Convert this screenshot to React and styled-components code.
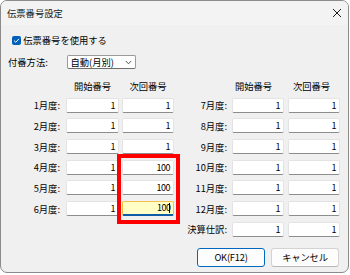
import React from "react";
import styled, { createGlobalStyle } from "styled-components";

const Global = createGlobalStyle`
  html, body { margin: 0; padding: 0; background: #ffffff; }
  body {
    font-family: "Noto Sans CJK JP", "Noto Sans", sans-serif;
    font-size: 9.3px;
    color: #000;
  }
`;

const Window = styled.div`
  position: relative;
  box-sizing: border-box;
  width: 349px;
  height: 273px;
  border: 1px solid #8b8b8b;
  border-radius: 7px;
  background: #f0f0f0;
  overflow: hidden;
  display: flex;
  flex-direction: column;
`;

const TitleBar = styled.div`
  box-sizing: border-box;
  height: 24px;
  background: #f3f3f3;
  display: flex;
  align-items: center;
  justify-content: space-between;
  padding: 0 6px 0 6px;
`;

const Title = styled.span`
  font-size: 9.3px;
  line-height: 12px;
  color: #1a1a1a;
`;

const CheckRow = styled.label`
  display: flex;
  align-items: center;
  gap: 2.5px;
  height: 14px;
  margin: 8px 0 0 10.7px;
  line-height: 12px;
`;

const CheckBox = styled.span`
  box-sizing: border-box;
  width: 9px;
  height: 9px;
  border-radius: 2px;
  background: #005fb8;
  display: flex;
  align-items: center;
  justify-content: center;
`;

const SelectRow = styled.div`
  display: flex;
  align-items: center;
  height: 14px;
  margin: 8px 0 0 7px;
`;

const SelectLabel = styled.span`
  width: 59px;
  line-height: 12px;
`;

const Select = styled.div`
  box-sizing: border-box;
  width: 69px;
  height: 14px;
  background: #fff;
  border: 1px solid #9a9a9a;
  border-bottom-color: #6e6e6e;
  border-radius: 2px;
  display: flex;
  align-items: center;
  justify-content: space-between;
  padding: 0 3px 0 2.5px;
  line-height: 12px;
`;

const Table = styled.div`
  display: grid;
  grid-template-columns: 65px 53px 55px 58px 52px 56px;
  grid-template-rows: 11px repeat(7, 15px);
  row-gap: 5.7px;
  margin-top: 12px;
  align-items: center;
`;

const Head = styled.div`
  grid-column: ${(p) => p.$col};
  justify-self: ${(p) => (p.$end ? "end" : "start")};
  width: ${(p) => p.$w}px;
  text-align: center;
  padding-right: ${(p) => p.$shift || 0}px;
  box-sizing: border-box;
  line-height: 11px;
  letter-spacing: -0.1px;
`;

const RowLabel = styled.div`
  grid-column: ${(p) => p.$col};
  text-align: right;
  padding-right: ${(p) => p.$pad}px;
  line-height: 12px;
`;

const Field = styled.div`
  grid-column: ${(p) => p.$col};
  justify-self: ${(p) => (p.$end ? "end" : "start")};
  box-sizing: border-box;
  width: ${(p) => p.$w}px;
  height: 15px;
  background: ${(p) => (p.$focus ? "#ffffc6" : "#ffffff")};
  border: 1px solid ${(p) => (p.$focus ? "#f2c24a" : "#e3e3e3")};
  border-bottom: ${(p) => (p.$focus ? "2px solid #0c5ca8" : "1px solid #8d8d8d")};
  border-radius: 2px;
  text-align: right;
  padding-right: 3px;
  font-size: 9px;
  line-height: ${(p) => (p.$focus ? "12px" : "13px")};
  letter-spacing: -0.5px;
  display: flex;
  justify-content: flex-end;
  align-items: center;
`;

const Caret = styled.span`
  display: inline-block;
  width: 1px;
  height: 10px;
  background: #000;
  margin-left: -1.5px;
`;

const ButtonRow = styled.div`
  display: flex;
  justify-content: flex-end;
  gap: 6px;
  margin-top: 11px;
  padding-right: 9px;
`;

const Button = styled.div`
  box-sizing: border-box;
  width: 68px;
  height: 19px;
  border-radius: 3px;
  background: #fdfdfd;
  border: 1px solid ${(p) => (p.$primary ? "#0067c0" : "#d3d3d3")};
  border-bottom-color: ${(p) => (p.$primary ? "#0067c0" : "#b8b8b8")};
  display: flex;
  align-items: center;
  justify-content: center;
  line-height: 12px;
  letter-spacing: -0.2px;
`;

const Annotation = styled.div`
  position: absolute;
  left: 116px;
  top: 153px;
  width: 63px;
  height: 70px;
  box-sizing: border-box;
  border: 4px solid #ff0000;
  pointer-events: none;
`;

const left = [
  ["1月度:", "1", "1"],
  ["2月度:", "1", "1"],
  ["3月度:", "1", "1"],
  ["4月度:", "1", "100"],
  ["5月度:", "1", "100"],
  ["6月度:", "1", "100"],
];
const right = [
  ["7月度:", "1", "1"],
  ["8月度:", "1", "1"],
  ["9月度:", "1", "1"],
  ["10月度:", "1", "1"],
  ["11月度:", "1", "1"],
  ["12月度:", "1", "1"],
  ["決算仕訳:", "1", "1"],
];

export default function App() {
  const cells = [];
  for (let i = 0; i < 7; i++) {
    const row = i + 2;
    const l = left[i];
    if (l) {
      const focus = i === 5;
      cells.push(
        <RowLabel key={`ll${i}`} $col={1} $pad={6} style={{ gridRow: row }}>{l[0]}</RowLabel>,
        <Field key={`la${i}`} $col={2} $w={53} style={{ gridRow: row }}>{l[1]}</Field>,
        <Field key={`lb${i}`} $col={3} $w={52} $end $focus={focus} style={{ gridRow: row }}>
          {l[2]}
          {focus && <Caret />}
        </Field>
      );
    }
    const r = right[i];
    cells.push(
      <RowLabel key={`rl${i}`} $col={4} $pad={5} style={{ gridRow: row }}>{r[0]}</RowLabel>,
      <Field key={`ra${i}`} $col={5} $w={52} style={{ gridRow: row }}>{r[1]}</Field>,
      <Field key={`rb${i}`} $col={6} $w={52} $end style={{ gridRow: row }}>{r[2]}</Field>
    );
  }

  return (
    <>
      <Global />
      <Window>
        <TitleBar>
          <Title>伝票番号設定</Title>
          <svg width="10" height="10" viewBox="0 0 10 10">
            <path d="M1 1 L9 9 M9 1 L1 9" stroke="#1c1c1c" strokeWidth="1" fill="none" />
          </svg>
        </TitleBar>
        <CheckRow>
          <CheckBox>
            <svg width="7" height="7" viewBox="0 0 7 7">
              <path d="M1 3.6 L2.8 5.3 L6 1.8" stroke="#fff" strokeWidth="1" fill="none" />
            </svg>
          </CheckBox>
          <span>伝票番号を使用する</span>
        </CheckRow>
        <SelectRow>
          <SelectLabel>付番方法:</SelectLabel>
          <Select>
            <span>自動(月別)</span>
            <svg width="7" height="5" viewBox="0 0 7 5">
              <path d="M0.8 1 L3.5 3.8 L6.2 1" stroke="#444" strokeWidth="0.9" fill="none" />
            </svg>
          </Select>
        </SelectRow>
        <Table>
          <Head $col={2} $w={53} style={{ gridRow: 1 }}>開始番号</Head>
          <Head $col={3} $w={52} $end style={{ gridRow: 1 }}>次回番号</Head>
          <Head $col={5} $w={52} $shift={9} style={{ gridRow: 1 }}>開始番号</Head>
          <Head $col={6} $w={52} $end $shift={5} style={{ gridRow: 1 }}>次回番号</Head>
          {cells}
        </Table>
        <ButtonRow>
          <Button $primary>OK(F12)</Button>
          <Button>キャンセル</Button>
        </ButtonRow>
        <Annotation />
      </Window>
    </>
  );
}
